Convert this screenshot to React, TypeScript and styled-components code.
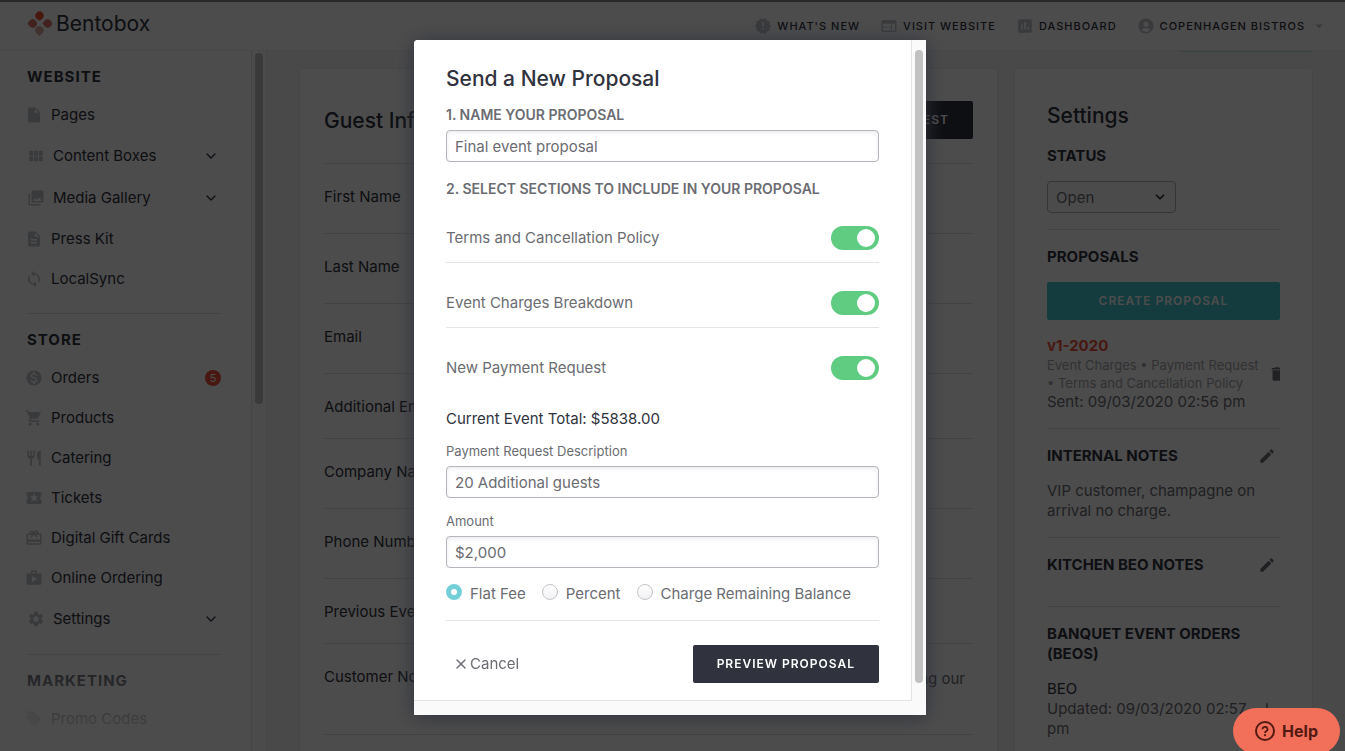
import React from "react";
import styled, { createGlobalStyle, css } from "styled-components";
import {
  MdAccountCircle,
  MdArrowDropDown,
  MdAssessment,
  MdDelete,
  MdDescription,
  MdEdit,
  MdInsertDriveFile,
  MdLocalActivity,
  MdLocalOffer,
  MdLoop,
  MdMonetizationOn,
  MdNewReleases,
  MdPhotoLibrary,
  MdRedeem,
  MdRestaurant,
  MdSettings,
  MdShop,
  MdShoppingCart,
  MdViewModule,
  MdWeb,
} from "react-icons/md";
import { ArrowDown, ChevronDown, X } from "lucide-react";

const color = {
  ink: "#30323d",
  text: "#6b6c72",
  muted: "#a5a6ab",
  icon: "#c0c1c8",
  line: "#e0e0e2",
  page: "#f6f6f7",
  teal: "#43c8cf",
  red: "#f04f3a",
  green: "#5fcc82",
};

const GlobalStyle = createGlobalStyle`
  *, *::before, *::after { box-sizing: border-box; }
  body {
    margin: 0;
    overflow: hidden;
    background: ${color.page};
    color: ${color.ink};
    font-family: Inter, "Liberation Sans", sans-serif;
    font-size: 15px;
    line-height: 20px;
  }
  button, input, select { font: inherit; color: inherit; }
  button { cursor: pointer; }
  h1, h2, h3, p, ul, dl, dd, dt, fieldset { margin: 0; padding: 0; border: 0; font-size: inherit; }
  ul { list-style: none; }
  a { color: inherit; text-decoration: none; }
`;

/* ---------- Page frame ---------- */

const Page = styled.div`
  display: flex;
  flex-direction: column;
  height: 100vh;
  overflow: hidden;
`;

const Header = styled.header`
  display: flex;
  align-items: center;
  justify-content: space-between;
  flex: none;
  height: 51px;
  padding: 0 17px 0 27px;
  background: #fff;
  border-top: 2px solid #85868f;
  border-bottom: 1px solid #efeff0;
`;

const Brand = styled.a`
  display: flex;
  align-items: center;
  gap: 4px;
  padding-bottom: 5px;
  font-size: 21px;
  line-height: 28px;
`;

const TopNav = styled.nav`
  display: flex;
  align-items: center;
  gap: 20px;
`;

const TopLink = styled.a`
  display: flex;
  align-items: center;
  gap: 5px;
  font-size: 11px;
  font-weight: 500;
  letter-spacing: 1px;
  text-transform: uppercase;

  svg { color: ${color.icon}; }
`;

const Body = styled.div`
  display: flex;
  flex: 1;
  min-height: 0;
`;

/* ---------- Sidebar ---------- */

const Sidebar = styled.aside`
  display: flex;
  flex: none;
  width: 267px;
  padding-left: 10px;
  overflow: hidden;
  background: #fdfdfd;
  border-right: 1px solid #eaeaeb;
`;

const SideScroll = styled.div`
  position: relative;
  flex: 1;
  min-width: 0;
  padding: 8px 30px 0 17px;
  overflow: hidden;
  background: #fff;
`;

const SideFade = styled.div`
  position: absolute;
  inset: auto 0 0 0;
  height: 112px;
  background: linear-gradient(rgba(255, 255, 255, 0), #fff 96%);
`;

const SideTrack = styled.div`
  flex: none;
  width: 15px;
  padding: 2px 2px 2px 3px;
  background: #fafafa;
  border-left: 1px solid #e8e8e8;
`;

const SideThumb = styled.div`
  width: 8px;
  height: 50.5%;
  background: #c1c1c1;
  border-radius: 4px;
`;

const SideGroup = styled.section`
  & + & {
    margin-top: 14px;
    padding-top: 8px;
    border-top: 1px solid ${color.line};
  }
`;

const SideHeading = styled.h2`
  font-size: 15px;
  font-weight: 700;
  line-height: 36px;
  letter-spacing: 1px;
  text-transform: uppercase;
`;

const sideRow = css`
  display: flex;
  align-items: center;
  gap: 8px;
  width: 100%;
  height: 40px;

  > svg:first-child { color: ${color.icon}; margin-left: -2px; }
`;

const SideLink = styled.a`
  ${sideRow}
`;

const SideToggle = styled.button`
  ${sideRow}
  height: 42px;
  padding: 0 2px;
  background: none;
  border: 0;
  text-align: left;

  > svg:last-child { margin-left: auto; }
`;

const Badge = styled.span`
  width: 16px;
  height: 16px;
  margin-left: auto;
  background: ${color.red};
  border-radius: 50%;
  color: #fff;
  font-size: 11px;
  line-height: 16px;
  text-align: center;
`;

/* ---------- Main columns ---------- */

const Main = styled.main`
  display: flex;
  flex: 1;
  flex-direction: column;
  min-width: 0;
  padding: 0 32px;
`;

const ActionEdge = styled.div`
  align-self: flex-end;
  flex: none;
  width: 132px;
  height: 1px;
  margin: 0 1px 16px 0;
  background: #bfe2e4;
`;

const Columns = styled.div`
  display: flex;
  flex: 1;
  gap: 16px;
`;

const card = css`
  background: #fff;
  border: 1px solid #ebebec;
  border-radius: 4px;
`;

const GuestCard = styled.section`
  ${card}
  flex: 1;
  min-width: 0;
  padding: 32px 24px;
`;

const GuestHead = styled.div`
  display: flex;
  align-items: center;
  justify-content: space-between;
  padding-bottom: 24px;
`;

const CardTitle = styled.h1`
  padding-top: 2px;
  font-size: 21px;
  font-weight: 500;
  line-height: 26px;
`;

const SolidButton = styled.button<{ $tone?: "dark" | "teal"; $wide?: boolean }>`
  width: ${(p) => (p.$wide ? "100%" : "auto")};
  height: 38px;
  padding: 0 24px;
  background: ${(p) => (p.$tone === "teal" ? color.teal : color.ink)};
  border: 0;
  border-radius: 2px;
  color: #fff;
  font-size: 12px;
  font-weight: 600;
  letter-spacing: 1px;
  text-transform: uppercase;
`;

const GuestRow = styled.div<{ $height: number }>`
  display: flex;
  justify-content: space-between;
  min-height: ${(p) => p.$height}px;
  padding: 23px 8px 0 0;
  border-top: 1px solid ${color.line};

  &:last-child { border-bottom: 1px solid ${color.line}; }

  dt { flex: none; }
  dd { color: ${color.text}; padding-top: 2px; }
`;

const SettingsCard = styled.aside`
  ${card}
  flex: none;
  width: 299px;
  padding: 32px;
`;

const Block = styled.section`
  padding: 17px 0 16px;

  & + & { border-top: 1px solid ${color.line}; }
`;

const BlockHead = styled.div`
  display: flex;
  align-items: center;
  justify-content: space-between;
  margin-bottom: 15px;
  padding-right: 4px;
`;

const BlockTitle = styled.h2`
  font-weight: 700;
  text-transform: uppercase;
`;

const IconButton = styled.button<{ $clip?: boolean }>`
  display: flex;
  flex: none;
  width: ${(p) => (p.$clip ? "12px" : "18px")};
  overflow: hidden;
  padding: 0;
  background: none;
  border: 0;
  color: #70717a;

  svg { flex: none; }
`;

const SelectBox = styled.div`
  display: flex;
  position: relative;
  width: 129px;

  svg {
    position: absolute;
    right: 9px;
    top: 9px;
    pointer-events: none;
  }
`;

const Select = styled.select`
  appearance: none;
  width: 100%;
  height: 32px;
  padding: 1px 8px 0;
  background: #fbfbfd;
  border: 1px solid #b4b5bd;
  border-radius: 4px;
  color: ${color.text};
`;

const Version = styled.div`
  display: flex;
  align-items: center;
  justify-content: space-between;
  margin-top: 16px;
`;

const VersionName = styled.a`
  display: block;
  color: ${color.red};
  font-weight: 700;
`;

const VersionParts = styled.p`
  color: ${color.muted};
  font-size: 13px;
  line-height: 18px;
`;

const Copy = styled.p`
  color: ${color.text};
`;

const BeoRow = styled.div`
  display: flex;
  align-items: center;
  justify-content: space-between;
  padding-right: 4px;
`;

/* ---------- Dialog ---------- */

const Overlay = styled.div`
  position: fixed;
  inset: 0;
  display: flex;
  align-items: flex-start;
  justify-content: center;
  padding: 40px 5px 36px 0;
  background: rgba(0, 0, 0, 0.7);
`;

const Dialog = styled.div`
  display: flex;
  width: 512px;
  max-width: 100%;
  padding-bottom: 14px;
  background: #fafafa;
  border-radius: 4px 0 0 0;
  box-shadow: 0 2px 20px #30323d;
`;

const DialogBody = styled.form`
  flex: 1;
  min-width: 0;
  padding: 24px 32px 17px;
  background: #fff;
  border: solid #e4e4e4;
  border-width: 0 1px 1px 0;
  border-top-left-radius: 4px;
  color: ${color.text};
`;

const DialogTrack = styled.div`
  flex: none;
  width: 14px;
  padding: 10px 3px 0;
`;

const DialogThumb = styled.div`
  height: 100%;
  max-height: 633px;
  background: #c1c1c1;
  border-radius: 4px;
`;

const DialogTitle = styled(CardTitle)`
  margin-bottom: 13px;
  color: ${color.ink};
`;

const StepLabel = styled.label`
  display: block;
  font-size: 14px;
  font-weight: 600;
  text-transform: uppercase;
`;

const FieldLabel = styled.label`
  display: block;
  font-size: 13px;
`;

const TextInput = styled.input`
  display: block;
  width: 100%;
  height: 32px;
  margin: 5px 0 13px;
  padding: 0 8px;
  background: #fff;
  border: 1px solid #b4b5bd;
  border-radius: 4px;
  box-shadow: inset 0 2px 4px rgba(0, 0, 0, 0.08);
`;

const Steps = styled.div`
  padding-top: 4px;
`;

const SwitchRow = styled.label`
  display: flex;
  align-items: center;
  justify-content: space-between;
  padding: 27px 0 12px;

  & + & {
    padding-top: 28px;
    border-top: 1px solid #e4e4e4;
  }
`;

const Switch = styled.input`
  appearance: none;
  display: flex;
  align-items: center;
  justify-content: flex-end;
  width: 48px;
  height: 24px;
  margin: 0;
  padding: 0 4px;
  background: ${color.green};
  border-radius: 12px;

  &::after {
    content: "";
    width: 18px;
    height: 18px;
    background: #fff;
    border-radius: 50%;
  }
`;

const Total = styled.p`
  margin: 17px 0 12px;
  color: ${color.ink};
`;

const Choices = styled.fieldset`
  display: flex;
  gap: 16px;
  padding: 3px 0 16px;
  border-bottom: 1px solid #e4e4e4;
`;

const Choice = styled.label`
  display: flex;
  gap: 8px;
`;

const Radio = styled.input`
  appearance: none;
  width: 16px;
  height: 16px;
  margin: 0;
  background: linear-gradient(#fff, #f1f1f4);
  border: 1px solid #c4c5cb;
  border-radius: 50%;

  &:checked {
    background: #fff;
    border: 5px solid #74d0d8;
  }
`;

const Actions = styled.div`
  display: flex;
  align-items: center;
  justify-content: space-between;
  padding-top: 24px;
`;

const CancelButton = styled.button`
  display: flex;
  align-items: center;
  gap: 1px;
  padding: 0 7px;
  background: none;
  border: 0;
`;

const HelpButton = styled.button`
  position: fixed;
  right: 5px;
  bottom: -3px;
  display: flex;
  align-items: center;
  gap: 7px;
  height: 46px;
  padding: 0 22px;
  background: #f2705a;
  border: 0;
  border-radius: 23px;
  color: #541a12;
  font-size: 16px;
  font-weight: 700;
`;

/* ---------- Drawings ---------- */

const LogoMark = () => (
  <svg width="25" height="25" viewBox="0 0 25 25" aria-hidden="true">
    <path d="M12.500 9.800 L9.300 7.400 A4.200 4.200 0 1 1 15.700 7.400 Z" fill="#f0502e" />
    <path d="M0.400 12.500 L3.100 9.200 A4.200 4.200 0 1 1 3.100 15.800 Z" fill="#d9746a" />
    <path d="M15.400 12.500 L18.100 9.200 A4.200 4.200 0 1 1 18.100 15.800 Z" fill="#d9746a" />
    <path d="M12.500 24.900 L9.200 22 A4.200 4.200 0 1 1 15.800 22 Z" fill="#dba5a2" />
  </svg>
);

const HelpMark = () => (
  <svg width="20" height="20" viewBox="0 0 20 20" fill="none" stroke="currentColor" strokeWidth="2" aria-hidden="true">
    <circle cx="10" cy="10" r="9" />
    <path d="M7.500 8.200 a2.500 2.400 0 1 1 3.700 2.100 c-0.900 0.500 -1.200 0.900 -1.200 1.700" strokeWidth="1.800" />
    <circle cx="10" cy="14.200" r="1.100" fill="currentColor" stroke="none" />
  </svg>
);

/* ---------- Data ---------- */

type NavItem = { label: string; Icon: React.ElementType; expands?: boolean; count?: number };

const sideGroups: { title: string; items: NavItem[] }[] = [
  {
    title: "Website",
    items: [
      { label: "Pages", Icon: MdInsertDriveFile },
      { label: "Content Boxes", Icon: MdViewModule, expands: true },
      { label: "Media Gallery", Icon: MdPhotoLibrary, expands: true },
      { label: "Press Kit", Icon: MdDescription },
      { label: "LocalSync", Icon: MdLoop },
    ],
  },
  {
    title: "Store",
    items: [
      { label: "Orders", Icon: MdMonetizationOn, count: 5 },
      { label: "Products", Icon: MdShoppingCart },
      { label: "Catering", Icon: MdRestaurant },
      { label: "Tickets", Icon: MdLocalActivity },
      { label: "Digital Gift Cards", Icon: MdRedeem },
      { label: "Online Ordering", Icon: MdShop },
      { label: "Settings", Icon: MdSettings, expands: true },
    ],
  },
  { title: "Marketing", items: [{ label: "Promo Codes", Icon: MdLocalOffer }] },
];

const guestRows = [
  { label: "First Name", height: 70 },
  { label: "Last Name", height: 70 },
  { label: "Email", height: 70 },
  { label: "Additional Email", height: 65 },
  { label: "Company Name", height: 70 },
  { label: "Phone Number", height: 70 },
  { label: "Previous Events", height: 65 },
  { label: "Customer Notes", height: 92, value: "We are hosting our" },
];

const sections = ["Terms and Cancellation Policy", "Event Charges Breakdown", "New Payment Request"];
const feeTypes = ["Flat Fee", "Percent", "Charge Remaining Balance"];

const SideItem = ({ label, Icon, expands, count }: NavItem) =>
  expands ? (
    <SideToggle type="button">
      <Icon size={18} />
      {label}
      <ChevronDown size={16} />
    </SideToggle>
  ) : (
    <SideLink href="#">
      <Icon size={18} />
      {label}
      {count ? <Badge>{count}</Badge> : null}
    </SideLink>
  );

export default function App() {
  return (
    <>
      <GlobalStyle />
      <Page>
        <Header>
          <Brand href="#">
            <LogoMark />
            Bentobox
          </Brand>
          <TopNav>
            <TopLink href="#"><MdNewReleases size={18} />What's New</TopLink>
            <TopLink href="#"><MdWeb size={18} />Visit Website</TopLink>
            <TopLink href="#"><MdAssessment size={18} />Dashboard</TopLink>
            <TopLink href="#">
              <MdAccountCircle size={18} />
              Copenhagen Bistros
              <MdArrowDropDown size={18} />
            </TopLink>
          </TopNav>
        </Header>

        <Body>
          <Sidebar>
            <SideScroll>
              {sideGroups.map((group) => (
                <SideGroup key={group.title}>
                  <SideHeading>{group.title}</SideHeading>
                  {group.items.map((item) => (
                    <SideItem key={item.label} {...item} />
                  ))}
                </SideGroup>
              ))}
              <SideFade />
            </SideScroll>
            <SideTrack>
              <SideThumb />
            </SideTrack>
          </Sidebar>

          <Main>
            <ActionEdge />
            <Columns>
              <GuestCard>
                <GuestHead>
                  <CardTitle>Guest Info</CardTitle>
                  <SolidButton type="button">Edit Guest</SolidButton>
                </GuestHead>
                <dl>
                  {guestRows.map((row) => (
                    <GuestRow key={row.label} $height={row.height}>
                      <dt>{row.label}</dt>
                      {row.value ? <dd>{row.value}</dd> : null}
                    </GuestRow>
                  ))}
                </dl>
              </GuestCard>

              <SettingsCard>
                <CardTitle as="h2">Settings</CardTitle>
                <Block>
                  <BlockHead><BlockTitle id="status">Status</BlockTitle></BlockHead>
                  <SelectBox>
                    <Select aria-labelledby="status" defaultValue="Open">
                      <option>Open</option>
                      <option>Closed</option>
                    </Select>
                    <ChevronDown size={14} strokeWidth={3} />
                  </SelectBox>
                </Block>
                <Block>
                  <BlockHead><BlockTitle>Proposals</BlockTitle></BlockHead>
                  <SolidButton type="button" $tone="teal" $wide>Create Proposal</SolidButton>
                  <Version>
                    <div>
                      <VersionName href="#">v1-2020</VersionName>
                      <VersionParts>Event Charges • Payment Request • Terms and Cancellation Policy</VersionParts>
                      <Copy>Sent: 09/03/2020 02:56 pm</Copy>
                    </div>
                    <IconButton type="button" $clip aria-label="Delete proposal"><MdDelete size={18} /></IconButton>
                  </Version>
                </Block>
                <Block>
                  <BlockHead>
                    <BlockTitle>Internal Notes</BlockTitle>
                    <IconButton type="button" aria-label="Edit internal notes"><MdEdit size={18} /></IconButton>
                  </BlockHead>
                  <Copy>VIP customer, champagne on arrival no charge.</Copy>
                </Block>
                <Block>
                  <BlockHead>
                    <BlockTitle>Kitchen BEO Notes</BlockTitle>
                    <IconButton type="button" aria-label="Edit kitchen notes"><MdEdit size={18} /></IconButton>
                  </BlockHead>
                </Block>
                <Block>
                  <BlockHead><BlockTitle>Banquet Event Orders (BEOs)</BlockTitle></BlockHead>
                  <BeoRow>
                    <div>
                      <p>BEO</p>
                      <Copy>Updated: 09/03/2020 02:57 pm</Copy>
                    </div>
                    <IconButton type="button" aria-label="Download BEO"><ArrowDown size={18} /></IconButton>
                  </BeoRow>
                </Block>
              </SettingsCard>
            </Columns>
          </Main>
        </Body>
      </Page>

      <Overlay>
        <Dialog role="dialog" aria-modal="true" aria-labelledby="dialog-title">
          <DialogBody>
            <DialogTitle as="h2" id="dialog-title">Send a New Proposal</DialogTitle>
            <StepLabel htmlFor="name">1. Name your proposal</StepLabel>
            <TextInput id="name" defaultValue="Final event proposal" />
            <Steps>
              <StepLabel as="h3">2. Select sections to include in your proposal</StepLabel>
              {sections.map((name) => (
                <SwitchRow key={name}>
                  {name}
                  <Switch type="checkbox" role="switch" defaultChecked />
                </SwitchRow>
              ))}
            </Steps>
            <Total>Current Event Total: $5838.00</Total>
            <FieldLabel htmlFor="description">Payment Request Description</FieldLabel>
            <TextInput id="description" defaultValue="20 Additional guests" />
            <FieldLabel htmlFor="amount">Amount</FieldLabel>
            <TextInput id="amount" defaultValue="$2,000" />
            <Choices aria-label="Fee type">
              {feeTypes.map((name, index) => (
                <Choice key={name}>
                  <Radio type="radio" name="fee" defaultChecked={index === 0} />
                  {name}
                </Choice>
              ))}
            </Choices>
            <Actions>
              <CancelButton type="button"><X size={16} strokeWidth={2} />Cancel</CancelButton>
              <SolidButton type="button">Preview Proposal</SolidButton>
            </Actions>
          </DialogBody>
          <DialogTrack>
            <DialogThumb />
          </DialogTrack>
        </Dialog>
      </Overlay>

      <HelpButton type="button">
        <HelpMark />
        Help
      </HelpButton>
    </>
  );
}
